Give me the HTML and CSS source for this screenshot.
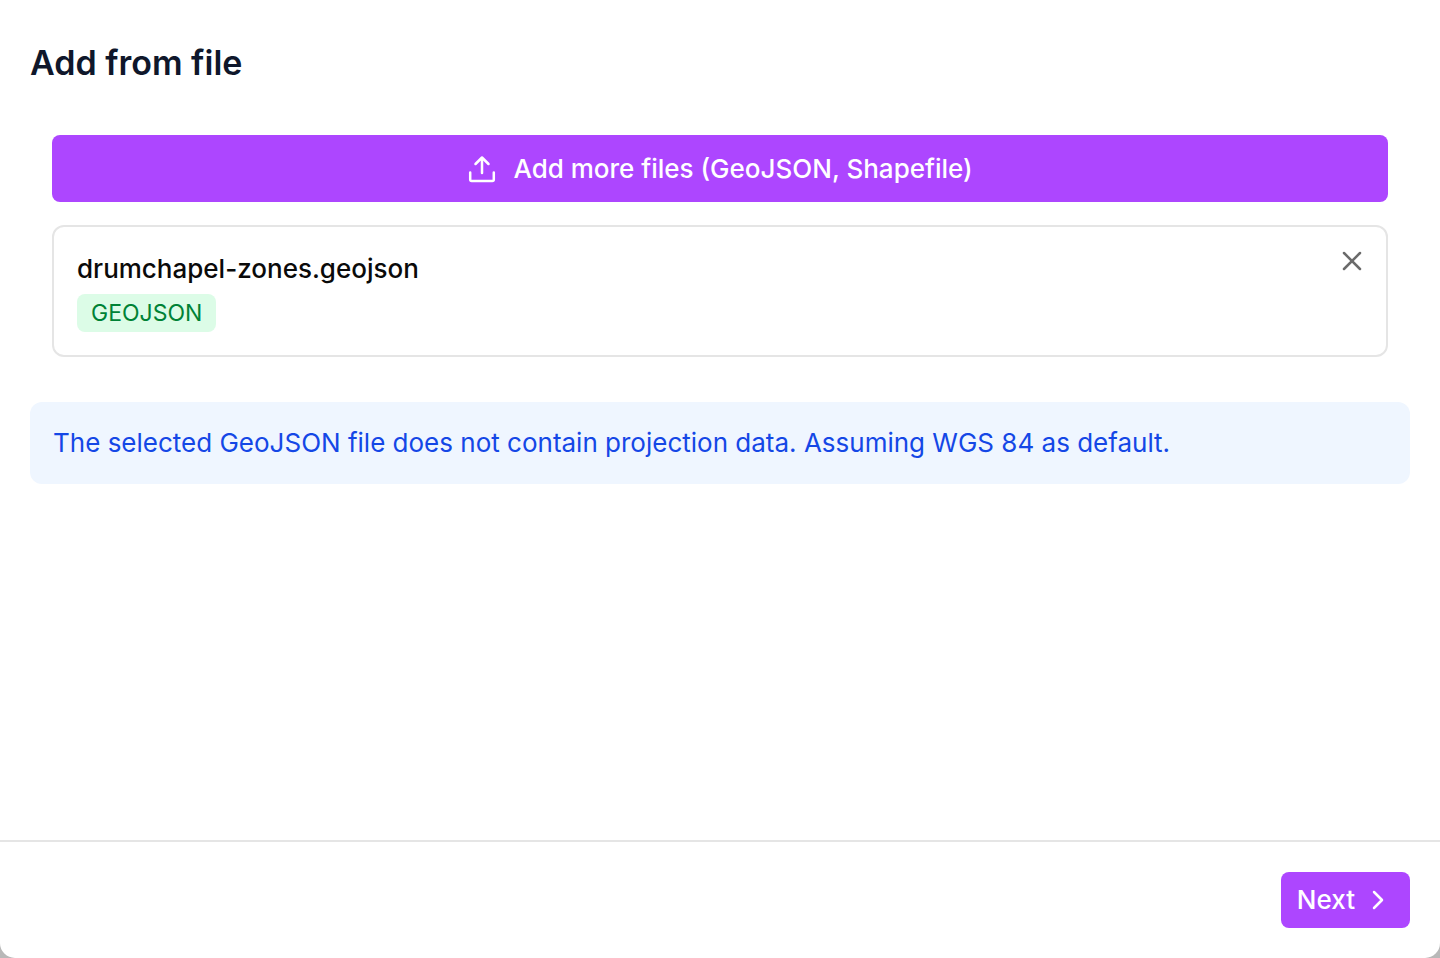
FILE: index.html
```html
<!DOCTYPE html>
<html lang="en">
<head>
  <meta charset="UTF-8">
  <meta name="viewport" content="width=device-width, initial-scale=1.0">
  <title>Add from file</title>
  <link rel="stylesheet" href="styles.css">
</head>
<body>

<div class="dialog">
  <main class="content">
    <h1>Add from file</h1>

    <div class="files">
      <button type="button" class="btn upload">
        <svg width="30" height="30" viewBox="0 0 30 30" aria-hidden="true">
          <path d="M15 19V4M8.5 10L15 3.5L21.5 10M3.2 18.5V25.5Q3.2 27 4.7 27H25.3Q26.8 27 26.8 25.5V18.5"/>
        </svg>
        Add more files (GeoJSON, Shapefile)
      </button>

      <div class="file-card">
        <div>
          <div class="file-name">drumchapel-zones.geojson</div>
          <span class="tag">GEOJSON</span>
        </div>
        <button type="button" class="remove" aria-label="Remove file">
          <svg width="20" height="20" viewBox="0 0 20 20" aria-hidden="true">
            <path d="M2 2L18 18M18 2L2 18"/>
          </svg>
        </button>
      </div>
    </div>

    <p class="notice">The selected GeoJSON file does not contain projection data. Assuming WGS 84 as default.</p>
  </main>

  <footer class="footer">
    <button type="button" class="btn next">
      Next
      <svg width="30" height="30" viewBox="0 0 30 30" aria-hidden="true">
        <path d="M11 7L19 15L11 23"/>
      </svg>
    </button>
  </footer>
</div>

</body>
</html>
```

FILE: styles.css
```css
* {
  box-sizing: border-box;
}
body {
  margin: 0;
  background-color: #b8b8b8;
  font-family: Inter, sans-serif;
  font-size: 26px;
  line-height: 38px;
}
.dialog {
  display: flex;
  flex-direction: column;
  min-height: 100vh;
  background-color: #fff;
  border-radius: 0 0 15px 15px;
}
.content {
  flex: 1;
  padding: 44px 30px 30px;
}
h1 {
  margin: 0;
  font-size: 34px;
  line-height: 38px;
  font-weight: 600;
  color: #0f172b;
}
.files {
  display: flex;
  flex-direction: column;
  gap: 23px;
  padding: 53px 22px 45px;
}
button {
  border: 0;
  font: inherit;
  cursor: pointer;
}
svg {
  fill: none;
  stroke: currentColor;
  stroke-width: 2.5;
  stroke-linecap: round;
  stroke-linejoin: round;
}
.btn {
  display: flex;
  align-items: center;
  justify-content: center;
  background-color: #ad46ff;
  color: #fff;
  font-weight: 500;
  border-radius: 8px;
}
.upload {
  gap: 16px;
  height: 67px;
}
.file-card {
  display: flex;
  justify-content: space-between;
  align-items: flex-start;
  padding: 23px;
  border: 2px solid #e5e5e5;
  border-radius: 12px;
}
.file-name {
  margin-bottom: 6px;
  font-weight: 500;
  color: #0a0a0a;
}
.tag {
  display: block;
  width: fit-content;
  padding: 0 14px;
  border-radius: 8px;
  background-color: #dcfce7;
  color: #008236;
  font-size: 23px;
}
.remove {
  display: flex;
  padding: 1px;
  background: none;
  color: #6b6b6b;
}
.notice {
  margin: 0;
  padding: 22px 23px;
  border-radius: 12px;
  background-color: #eff6ff;
  color: #1447e6;
}
.footer {
  display: flex;
  justify-content: flex-end;
  padding: 30px;
  border-top: 2px solid #e5e5e5;
}
.next {
  gap: 8px;
  height: 56px;
  padding: 0 17px 0 16px;
}
```
